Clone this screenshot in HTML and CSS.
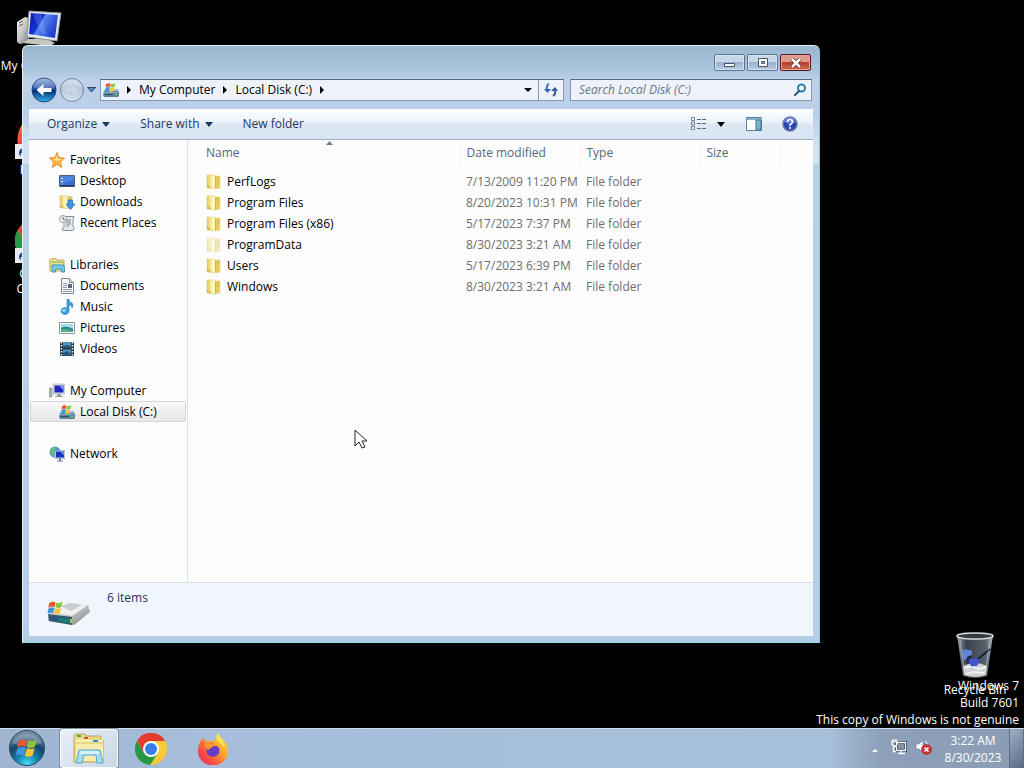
FILE: index.html
```html
<!DOCTYPE html>
<html lang="en">
<head>
  <meta charset="UTF-8">
  <title>Local Disk (C:)</title>
  <link rel="stylesheet" href="styles.css">
</head>
<body>
  <!-- shared drawings -->
  <svg class="defs" aria-hidden="true">
    <defs>
      <linearGradient id="gold" x1="0" x2="1"><stop offset="0" stop-color="#e2ca55"/><stop offset=".4" stop-color="#fbf2b0"/><stop offset=".6" stop-color="#dcc254"/><stop offset="1" stop-color="#efd96f"/></linearGradient>
      <linearGradient id="screen" x1="0" x2="1" y2=".5"><stop offset="0" stop-color="#0717a8"/><stop offset=".45" stop-color="#1733dc"/><stop offset=".5" stop-color="#5a86ee"/><stop offset="1" stop-color="#1c3fd0"/></linearGradient>
      <linearGradient id="metal" x1="0" y1="0" x2="1" y2="1"><stop offset="0" stop-color="#f5f5f5"/><stop offset=".5" stop-color="#c4c5c6"/><stop offset="1" stop-color="#77797b"/></linearGradient>
      <radialGradient id="orb" cx=".5" cy=".95" r=".9"><stop offset="0" stop-color="#3fe0f5"/><stop offset=".35" stop-color="#167fae"/><stop offset=".65" stop-color="#174468"/><stop offset="1" stop-color="#7891a6"/></radialGradient>
      <linearGradient id="fire" x1="1" y1="0" x2="0" y2="1"><stop offset="0" stop-color="#fff04a"/><stop offset=".4" stop-color="#ffa42b"/><stop offset=".7" stop-color="#ff503c"/><stop offset="1" stop-color="#e51c78"/></linearGradient>
      <linearGradient id="back" x1="0" y1="0" x2="0" y2="1"><stop offset="0" stop-color="#8dacdb"/><stop offset=".48" stop-color="#1e4aa0"/><stop offset=".52" stop-color="#07286f"/><stop offset="1" stop-color="#2fb7ef"/></linearGradient>
      <linearGradient id="forward" x1="0" y1="0" x2="0" y2="1"><stop offset="0" stop-color="#dbe5f1"/><stop offset=".5" stop-color="#b7c7da"/><stop offset="1" stop-color="#d8e4f2"/></linearGradient>
      <linearGradient id="glass" x1="0" x2="1"><stop offset="0" stop-color="#9ba7ae"/><stop offset=".25" stop-color="#39434d"/><stop offset=".8" stop-color="#55616b"/><stop offset="1" stop-color="#a8b2b8"/></linearGradient>
    </defs>
    <symbol id="flag" viewBox="0 0 20 20">
      <path d="M2 4q4-3 8-1L9 9Q5 7 1 10z" fill="#e8542c"/>
      <path d="M11 3q4 2 8-1l-2 7q-4 2-7 0z" fill="#8cc43e"/>
      <path d="M1 11q4-3 8-1l-2 7q-3-2-7 0z" fill="#4198df"/>
      <path d="M10 10q4 2 7 0l-2 7q-4 2-7 0z" fill="#fbc532"/>
    </symbol>
    <symbol id="folder" viewBox="0 0 16 16">
      <path d="M1 1h7l1 1h5v12l-6 1-7-1z" fill="url(#gold)" stroke="#dcc76c" stroke-width=".5"/>
      <path d="M6 1l3 1v13l-3-1z" fill="#fff7bd"/>
      <path d="M9 3h1v11l-1 1zM12 3h1v4l-1 2z" fill="#c3a63d" opacity=".6"/>
      <path d="M1 10l5 4H1z" fill="#c4a63c" opacity=".5"/>
    </symbol>
    <symbol id="drive" viewBox="0 0 16 16">
      <path d="M1 9l2-2h11l2 3v4l-1 1H1l-1-2z" fill="#5c849b"/>
      <path d="M1 9l2-2h10l2 2z" fill="#b9cbd2"/>
      <path d="M1 10h14v1H1z" fill="#86afc2"/>
      <path d="M2 12h8v1H2z" fill="#304f68"/>
      <path d="M12 12h2v1h-2z" fill="#74e14b"/>
      <use href="#flag" x="2" y="0" width="11" height="11"/>
    </symbol>
    <symbol id="computer" viewBox="0 0 48 48">
      <path d="M2 15l8-5 4 1v24l-9 2-3-2z" fill="url(#metal)"/>
      <path d="M4 16l4-2M4 19l4-2" stroke="#555" />
      <path d="M14 32h18l8 4-5 3-27-3z" fill="#c4c9bd"/>
      <path d="M14 4l32 2-4 28-30-4z" fill="#e4e9ee" stroke="#8b949c"/>
      <path d="M16 6l27 2-3 23-26-4z" fill="url(#screen)"/>
      <path d="M26 7l6 21-5-1L17 6z" fill="#b6d2ff" opacity=".2"/>
    </symbol>
    <symbol id="chrome" viewBox="0 0 32 32">
      <circle cx="16" cy="16" r="16" fill="#f9c938"/>
      <path d="M2 8a16 16 0 0 1 28 0H16l-7 12z" fill="#e33b2e"/>
      <path d="M2 8a16 16 0 0 0 13 24l8-12H9z" fill="#279847"/>
      <circle cx="16" cy="16" r="8" fill="#fff"/>
      <circle cx="16" cy="16" r="6" fill="#367de9"/>
    </symbol>
    <symbol id="firefox" viewBox="0 0 32 32">
      <path d="M6 5l4 4 6-2c2 0 3 0 4 1l-1-4 2-4 3 5c4 3 7 8 7 13a15 14 0 0 1-30 1C1 13 3 8 6 5z" fill="url(#fire)"/>
      <path d="M10 11l6-1c-3 2-1 3 3 3 3 0 4 4 3 7-2 5-10 5-12 0-1-3-1-6 0-9z" fill="#693bc7"/>
      <path d="M8 10c4-2 6 1 9 2-1 3-4 2-5 5-3-1-5-4-4-7z" fill="#ff9334"/>
      <path d="M21 0l3 5c3 3 4 7 3 11-1-5-5-6-7-8-1-3-1-6 1-8z" fill="#ffe14a"/>
    </symbol>
    <symbol id="shortcut" viewBox="0 0 14 14">
      <path d="M0 0h14v14H0z" fill="#e8ecf1"/>
      <path d="M5 12C2 7 5 4 8 4V1l5 5-5 5V8c-2 0-3 1-3 4z" fill="#254b92"/>
    </symbol>
  </svg>

  <main class="desktop">
    <div class="shortcuts">
      <a href="#" class="shortcut">
        <svg class="shortcut-icon"><use href="#computer"/></svg>
        <span>My Computer</span>
      </a>
      <a href="#" class="shortcut">
        <svg class="shortcut-icon" viewBox="0 0 48 48"><use href="#firefox" x="1" y="4" width="44" height="44"/><use href="#shortcut" y="33" x="0" width="15" height="15"/></svg>
        <span>Firefox</span>
      </a>
      <a href="#" class="shortcut">
        <svg class="shortcut-icon" viewBox="0 0 48 48"><use href="#chrome" x="0" y="4" width="44" height="44"/><use href="#shortcut" y="33" x="0" width="15" height="15"/></svg>
        <span>Google Chrome</span>
      </a>
    </div>

    <a href="#" class="shortcut recycle">
      <svg class="shortcut-icon" viewBox="0 0 48 48">
        <path d="M6 4h36l-6 41q-12 4-24 0z" fill="url(#glass)"/>
        <path d="M12 35q12-6 24 0l-1 9q-11 4-22 0z" fill="#cfd0d1"/>
        <path d="M14 37l7-2 6 3 8-2M15 43l8-2 10 1" stroke="#f0f0f0" stroke-width="2" fill="none"/>
        <path d="M18 25l5 5 4-2 12-10M15 22l3 10" stroke="#172138" stroke-width="2" fill="none"/>
        <path d="M11 20q3-3 6-1 4-1 4 3 0 3-4 3l-2 4q-4-1-3-4-2-2-1-5z" fill="#6283d6"/>
        <path d="M19 28q2-2 4 0 2-2 4 0 3 2 0 4 0 4-4 3-4 1-4-2-3-3 0-5z" fill="#4254cf"/>
        <ellipse cx="24" cy="5" rx="18" ry="3" fill="#363b3e" stroke="#d6dbde" stroke-width="1.5"/>
        <path d="M9 9l5 34M39 9l-5 34" stroke="#e8edf0" opacity=".4"/>
      </svg>
      <span>Recycle Bin</span>
    </a>

    <p class="watermark">Windows 7<br>Build 7601<br>This copy of Windows is not genuine</p>

    <section class="window">
      <header class="titlebar">
        <button class="caption" aria-label="Minimize"><svg width="12" height="10"><path d="M.5 5.500h10v3H.5z" fill="#fff" stroke="#46566b"/></svg></button>
        <button class="caption" aria-label="Maximize"><svg width="12" height="10"><path d="M1.500.5h9v8h-9z" fill="#fff" stroke="#46566b"/><path d="M4.500 3.500h3v2h-3z" fill="#9db4d0" stroke="#46566b"/></svg></button>
        <button class="caption close" aria-label="Close"><svg width="12" height="10"><path d="M2 1l8 8M10 1L2 9" stroke="#5b2a2b" stroke-width="4"/><path d="M2 1l8 8M10 1L2 9" stroke="#fff" stroke-width="2.500"/></svg></button>
      </header>

      <nav class="navbar">
        <div class="travel">
          <button aria-label="Back"><svg width="26" height="26"><circle cx="13" cy="13" r="12" fill="url(#back)" stroke="#24467d"/><path d="M2 10a11 9 0 0 1 22 0q-11 5-22 0z" fill="#fff" opacity=".2"/><path d="M5.500 13l7-6v4h8v4h-8v4z" fill="#fff"/></svg></button>
          <button aria-label="Forward"><svg width="26" height="26"><circle cx="13" cy="13" r="11.500" fill="url(#forward)" stroke="#71839b"/><path d="M20 13l-7-6v4H6v4h7v4z" fill="#c9d6e6" stroke="#b9c8da" stroke-width=".5"/></svg></button>
          <button aria-label="Recent pages"><svg width="10" height="8"><path d="M.5 1.500h8l-4 4.500z" fill="#4f8cc7" stroke="#1e4474"/></svg></button>
        </div>
        <div class="address">
          <svg class="icon"><use href="#drive"/></svg>
          <svg class="sep" viewBox="0 0 4 8"><path d="M0 0l4 4-4 4z"/></svg>
          <a href="#">My Computer</a>
          <svg class="sep" viewBox="0 0 4 8"><path d="M0 0l4 4-4 4z"/></svg>
          <a href="#">Local Disk (C:)</a>
          <svg class="sep" viewBox="0 0 4 8"><path d="M0 0l4 4-4 4z"/></svg>
          <button class="history" aria-label="Previous locations"><svg width="8" height="4"><path d="M0 0h8L4 4z"/></svg></button>
          <button class="refresh" aria-label="Refresh"><svg width="16" height="14"><path d="M6 1Q3 2 4 7" stroke="#3b75c4" stroke-width="2" fill="none"/><path d="M1 6h7l-3.500 4z" fill="#2d67ba"/><path d="M10 13q3-2 2-7" stroke="#2c5a9c" stroke-width="2" fill="none"/><path d="M8 8h7l-3-4z" fill="#2c5a9c"/></svg></button>
        </div>
        <div class="search">
          <input type="text" aria-label="Search" placeholder="Search Local Disk (C:)">
          <svg width="14" height="14"><circle cx="8.500" cy="5" r="3.500" fill="#eef8fd" stroke="#2f7fa9" stroke-width="2"/><path d="M6 8l-4 4" stroke="#27517c" stroke-width="2" stroke-linecap="round"/></svg>
        </div>
      </nav>

      <div class="client">
        <div class="toolbar">
          <button>Organize <svg width="8" height="5"><path d="M0 0h8L4 5z"/></svg></button>
          <button>Share with <svg width="8" height="5"><path d="M0 0h8L4 5z"/></svg></button>
          <button>New folder</button>
          <div class="tools">
            <button aria-label="Change your view"><svg width="16" height="14"><path d="M.5.5h3v3h-3zM.5 5h3v3h-3zM.5 9.500h3v3h-3z" fill="#fff" stroke="#6e8096"/><path d="M6 2.500h9M6 6.500h9M6 11.500h9" stroke="#52667e" stroke-dasharray="4 1"/></svg></button>
            <button aria-label="More options"><svg width="8" height="5"><path d="M0 0h8L4 5z"/></svg></button>
            <button aria-label="Preview pane"><svg width="17" height="14"><path d="M.5.5h15v13H.5z" fill="#fff" stroke="#5c7d96"/><path d="M1 1h15v2H1z" fill="#8bb2c9"/><path d="M10 3h5v10h-5z" fill="#76b9c5" stroke="#44758c"/></svg></button>
            <button aria-label="Help"><svg width="16" height="16"><circle cx="8" cy="8" r="7" fill="#2947b0" stroke="#6d7a9d" stroke-width="1.500"/><path d="M2 6a6 5 0 0 1 12 0q-6 4-12 0z" fill="#7e9be8" opacity=".6"/><path d="M5.500 6q0-2.500 2.500-2.500T10.500 6Q10.500 7 8 9v1M8 11v2" stroke="#fff" stroke-width="1.700" fill="none"/></svg></button>
          </div>
        </div>

        <div class="panes">
          <nav class="tree">
            <ul>
              <li><a href="#"><svg class="icon" viewBox="0 0 16 16"><path d="M8 .5l2 5 5.500.5-4 4 1.200 5.500L8 12.500l-4.700 3L4.500 10l-4-4L6 5.500z" fill="#fbb63f" stroke="#dc8428" stroke-width=".8"/><path d="M8 3l1 4 4 .5-5 1.500-4-2 3-.5z" fill="#ffe6a0"/></svg>Favorites</a></li>
              <li class="child"><a href="#"><svg class="icon" viewBox="0 0 16 16"><path d="M.5 2.500h15v11H.5z" fill="#386fd1" stroke="#4c6079"/><path d="M1 3h14v4Q7 7 3 13H1z" fill="#75aaf3" opacity=".4"/><path d="M1 12h14v1.500H1z" fill="#263f6a"/><path d="M2 5h2v1H2zM2 8h2v1H2z" fill="#e9f4fa"/></svg>Desktop</a></li>
              <li class="child"><a href="#"><svg class="icon" viewBox="0 0 16 16"><use href="#folder" width="15" height="16"/><path d="M9.500 6h4v4H16l-4.500 5.500L7 10h2.500z" fill="#3c96e4" stroke="#1c65ab" stroke-width=".7"/></svg>Downloads</a></li>
              <li class="child"><a href="#"><svg class="icon" viewBox="0 0 16 16"><path d="M5 1.500h10l-1 3v8l1.500 1-1.500 2H4l-1-2 2-1z" fill="#e8edf0" stroke="#838e96"/><path d="M7 5h5M7 7h5M7 9h5M7 11h3" stroke="#78858e"/><circle cx="4" cy="4" r="3.500" fill="#f5f7f8" stroke="#8d989f"/><path d="M4 2v2.500h2" stroke="#58656e" fill="none"/></svg>Recent Places</a></li>
            </ul>
            <ul>
              <li><a href="#"><svg class="icon" viewBox="0 0 16 16"><path d="M.5 3L3 1.500h4L8 3h7v11H1z" fill="#f2de84" stroke="#c6ad56"/><path d="M2 4h12v2H2z" fill="#a9cc83"/><path d="M3 8h12l.5 7h-3v-3h-6v3H3z" fill="#79cbec" stroke="#3994c2"/></svg>Libraries</a></li>
              <li class="child"><a href="#"><svg class="icon" viewBox="0 0 16 16"><path d="M2.500.5h8l4 4v11h-12z" fill="#f7f9fa" stroke="#7f8b94"/><path d="M10.500.5v4h4" fill="#d5dce1" stroke="#7f8b94"/><path d="M4 5.500h4M4 7.500h4M4 9.500h4M4 11.500h9M4 13.500h9" stroke="#8a98a4"/><path d="M9 6h4v4H9z" fill="#53687c"/></svg>Documents</a></li>
              <li class="child"><a href="#"><svg class="icon" viewBox="0 0 16 16"><path d="M8 0h2q0 3 3 4 2 2 0 5 0-3-3-3v6a4 3.500 0 1 1-2-3z" fill="#35a0dc" stroke="#1f75b0" stroke-width=".5"/><ellipse cx="5" cy="11.500" rx="2" ry="1.300" fill="#a6e2fa"/></svg>Music</a></li>
              <li class="child"><a href="#"><svg class="icon" viewBox="0 0 16 16"><path d="M.5 2.500h15v11H.5z" fill="#fff" stroke="#8497a3"/><path d="M2 4h12v8H2z" fill="#a2ddec"/><path d="M2 8q5-3 12 1v3H2z" fill="#267f89"/><path d="M2 9q7-1 12 2v1H2z" fill="#52ad83"/></svg>Pictures</a></li>
              <li class="child"><a href="#"><svg class="icon" viewBox="0 0 16 16"><path d="M1 1h14v14H1z" fill="#243744"/><path d="M4 1h8v6H4zM4 8.500h8V15H4z" fill="#5591bb"/><path d="M4 5l5-1 3 2v1H4zM4 12l4-2 4 3v2H4z" fill="#24567c"/><path d="M2.500 1v14M13.500 1v14" stroke="#eff4f6" stroke-width="1.500" stroke-dasharray="1.500 1.500"/></svg>Videos</a></li>
            </ul>
            <ul>
              <li><a href="#"><svg class="icon" viewBox="0 0 16 16"><path d="M0 5h3v9H0z" fill="#b3b5a6" stroke="#7a7c73" stroke-width=".5"/><path d="M4 1h12v10H4z" fill="#dde1e6" stroke="#8e98a4" stroke-width=".5"/><path d="M5.500 2.500h9v7h-9z" fill="#1b25c2"/><path d="M10 2.500h4.500v5z" fill="#7995ec"/><path d="M8 11h4v2h2v1H6v-1h2z" fill="#969ea6"/></svg>My Computer</a></li>
              <li class="child selected"><a href="#"><svg class="icon"><use href="#drive"/></svg>Local Disk (C:)</a></li>
            </ul>
            <ul>
              <li><a href="#"><svg class="icon" viewBox="0 0 16 16"><circle cx="6" cy="6" r="5.500" fill="#3b9bc6"/><path d="M1 4q3-4 6-3L5 5l3 2-2 4Q1 9 1 4z" fill="#65bd88"/><path d="M6 4.500h10v8H6z" fill="#d9e4ed" stroke="#6d87a1" stroke-width=".5"/><path d="M7 5.500h8v6H7z" fill="#1730be"/><path d="M11 5.500h4v4z" fill="#6c91ec"/><path d="M10 12.500h2v2h2v1H8v-1h2z" fill="#687b91"/></svg>Network</a></li>
            </ul>
          </nav>

          <div class="files">
            <svg class="sorted" width="7" height="4"><path d="M0 4l3.500-4L7 4z" fill="#6c7e90"/></svg>
            <table>
              <colgroup><col class="col-name"><col class="col-date"><col class="col-type"><col class="col-size"><col></colgroup>
              <thead>
                <tr><th>Name</th><th>Date modified</th><th>Type</th><th>Size</th><td></td></tr>
              </thead>
              <tbody>
                <tr><td><svg class="icon"><use href="#folder"/></svg>PerfLogs</td><td>7/13/2009 11:20 PM</td><td>File folder</td><td></td><td></td></tr>
                <tr><td><svg class="icon"><use href="#folder"/></svg>Program Files</td><td>8/20/2023 10:31 PM</td><td>File folder</td><td></td><td></td></tr>
                <tr><td><svg class="icon"><use href="#folder"/></svg>Program Files (x86)</td><td>5/17/2023 7:37 PM</td><td>File folder</td><td></td><td></td></tr>
                <tr class="hidden-item"><td><svg class="icon"><use href="#folder"/></svg>ProgramData</td><td>8/30/2023 3:21 AM</td><td>File folder</td><td></td><td></td></tr>
                <tr><td><svg class="icon"><use href="#folder"/></svg>Users</td><td>5/17/2023 6:39 PM</td><td>File folder</td><td></td><td></td></tr>
                <tr><td><svg class="icon"><use href="#folder"/></svg>Windows</td><td>8/30/2023 3:21 AM</td><td>File folder</td><td></td><td></td></tr>
              </tbody>
            </table>
          </div>
        </div>

        <footer class="details">
          <svg width="46" height="32" viewBox="0 0 46 32">
            <path d="M2 17L22 5l20 3 2 7-16 13-26-4z" fill="url(#metal)"/>
            <path d="M6 15L22 5l20 3-16 11z" fill="#eff0f0"/>
            <path d="M15 9l9-3 12 2-11 6z" fill="#c9cbcc"/>
            <path d="M2 17l24 3v8L3 24z" fill="#315c68"/>
            <path d="M5 20l16 2v3L5 23z" fill="#2b4f9a"/>
            <path d="M12 21l11 1v4l-11-2z" fill="#14866f"/>
            <path d="M24 22h2v4h-2z" fill="#89dd48"/>
            <use href="#flag" x="1" y="3" width="17" height="16"/>
          </svg>
          <span>6 items</span>
        </footer>
      </div>
    </section>

    <svg class="cursor" width="14" height="21"><path d="M1 1v16l4-4 3 6 3-1-3-6h5z" fill="#fff" stroke="#222"/></svg>
  </main>

  <footer class="taskbar">
    <button class="start" aria-label="Start"><svg width="38" height="38"><circle cx="19" cy="19" r="17.500" fill="url(#orb)" stroke="#23455f"/><path d="M4 14a16 14 0 0 1 30 0q-15 7-30 0z" fill="#fff" opacity=".25"/><use href="#flag" x="8" y="8" width="22" height="22"/></svg></button>
    <button class="task active" aria-label="Windows Explorer"><svg width="36" height="32" viewBox="0 0 36 32"><path d="M3 3l1-2h10l1 2h15v4h2v22H3z" fill="#eed982" stroke="#bda35a"/><path d="M5 6h27v22H5z" fill="#f8edaa"/><path d="M5 10h27M18 6h13" stroke="#d7c26b"/><path d="M6 2h4v2H6z" fill="#41a947"/><path d="M13 4h4v2h-4z" fill="#d34e32"/><path d="M22 7h5v2h-5z" fill="#3989cb"/><path d="M8 17h21l3 13h-6l-1-8H13l-2 8H5z" fill="#a4dcf5" stroke="#56a9d5"/><path d="M9 18h19v3H9z" fill="#d8f2fc"/></svg></button>
    <button class="task" aria-label="Google Chrome"><svg width="32" height="32"><use href="#chrome"/></svg></button>
    <button class="task" aria-label="Firefox"><svg width="32" height="32"><use href="#firefox"/></svg></button>
    <div class="tray">
      <button aria-label="Show hidden icons"><svg width="8" height="5"><path d="M0 4.500l4-4 4 4z" fill="#fff" stroke="#65758a" stroke-width=".5"/></svg></button>
      <button aria-label="Network"><svg width="16" height="16"><path d="M5.500 3.500h9v8h-9z" fill="#8194ac" stroke="#34465c" stroke-width="3"/><path d="M5.500 3.500h9v8h-9zM10 12v2M7 14.500h7M2.500 8v4.500H5M1 2.500h5v3l-2 2H3l-2-2zM2 0v3M5 0v3" fill="none" stroke="#fff" stroke-width="1.300"/></svg></button>
      <button aria-label="Volume muted"><svg width="18" height="16"><path d="M1 5h3l4-4v13l-4-4H1z" fill="#fff" stroke="#5c6d82" stroke-width=".6"/><path d="M10 2q3 2 3 6" stroke="#fff" fill="none"/><circle cx="11.500" cy="10.500" r="5" fill="#cf3434" stroke="#9e2227" stroke-width=".6"/><path d="M9.500 8.500l4 4M13.500 8.500l-4 4" stroke="#fff" stroke-width="1.600"/></svg></button>
      <button class="clock">3:22 AM<br>8/30/2023</button>
    </div>
    <button class="show-desktop" aria-label="Show desktop"></button>
  </footer>
</body>
</html>
```

FILE: styles.css
```css
*{
  box-sizing: border-box;
}
body{
  margin: 0;
  height: 100vh;
  display: flex;
  flex-direction: column;
  overflow: hidden;
  background: #000;
  color: #000;
  font: 12px/16px "Open Sans", "Noto Sans", sans-serif;
}
button, input{
  margin: 0;
  padding: 0;
  border: none;
  background: none;
  font: inherit;
  color: inherit;
}
a{
  color: inherit;
  text-decoration: none;
}
ul{
  list-style: none;
  margin: 0 0 21px;
  padding: 0;
}
svg{
  flex: none;
}
.defs{
  position: absolute;
  width: 0;
  height: 0;
}
.icon{
  width: 16px;
  height: 16px;
}

/*
 *  Desktop
 */
.desktop{
  flex: 1;
  position: relative;
  color: #fff;
}
.shortcuts{
  display: grid;
  grid-auto-rows: 104px;
  width: 78px;
  padding-top: 7px;
}
.shortcut{
  display: flex;
  flex-direction: column;
  align-items: center;
  gap: 3px;
  width: 78px;
  line-height: 15px;
  text-align: center;
}
.shortcut-icon{
  width: 48px;
  height: 48px;
}
.recycle{
  position: absolute;
  right: 10px;
  bottom: 31px;
}
.watermark{
  position: absolute;
  right: 5px;
  bottom: 0;
  margin: 0;
  line-height: 17px;
  text-align: right;
}
.cursor{
  position: absolute;
  left: 354px;
  top: 429px;
}

/*
 *  Explorer window
 */
.window{
  position: absolute;
  left: 22px;
  right: 204px;
  top: 45px;
  bottom: 85px;
  display: flex;
  flex-direction: column;
  padding: 0 6px 6px 6px;
  border: 1px solid #e5f2fa;
  border-right-color: #6fcde8;
  border-bottom-color: #8bd6ed;
  border-radius: 6px 6px 0 0;
  background: linear-gradient(#9cb6cf, #a9c5dd 24px, #c0d0e9 34px, #b9cfe9 70px, #d3e2f1 100px, #d3e2f1 117px, #b9d1e4 119px, #b5cee8);
  color: #000;
}
.titlebar{
  display: flex;
  justify-content: flex-end;
  gap: 2px;
  height: 33px;
  padding: 8px 2px 0 0;
}
.caption{
  display: flex;
  align-items: center;
  justify-content: center;
  width: 31px;
  height: 17px;
  border: 1px solid #5d7593;
  border-radius: 2px;
  background: linear-gradient(#c9d8e8 45%, #9bb2cf 50%, #b8cce4);
  box-shadow: inset 0 0 0 1px #d5e2f0;
}
.close{
  border-color: #551d23;
  background: linear-gradient(#dd9c8e 45%, #b93d2c 50%, #cc6b52);
  box-shadow: inset 0 0 0 1px #e5a99b;
}
.navbar{
  display: flex;
  align-items: center;
  height: 22px;
  margin: 0 1px 8px 2px;
}
.travel{
  display: flex;
  align-items: center;
  gap: 2px;
  width: 69px;
}
.travel button, .history, .refresh{
  display: flex;
  align-items: center;
  justify-content: center;
}
.address, .search{
  display: flex;
  align-items: center;
  height: 22px;
  border: 1px solid #8598b0;
  border-top-color: #59687c;
  background: #eef3fb;
}
.address{
  flex: 1;
  gap: 8px;
  padding-left: 2px;
}
.sep{
  width: 4px;
  height: 8px;
}
.history{
  width: 21px;
  height: 20px;
  margin-left: auto;
}
.refresh{
  width: 25px;
  height: 20px;
  margin-left: -8px;
  border-left: 1px solid #8598b0;
}
.search{
  width: 242px;
  margin-left: 6px;
  padding: 0 4px 0 8px;
}
.search input{
  flex: 1;
  min-width: 0;
  outline: none;
}
.search input::placeholder{
  color: #6d7580;
  font-style: italic;
  opacity: 1;
}
.client{
  flex: 1;
  display: flex;
  flex-direction: column;
  min-height: 0;
  background: #fdfdfe;
}
.toolbar{
  display: flex;
  align-items: center;
  gap: 30px;
  height: 31px;
  padding: 0 15px 0 18px;
  border-bottom: 1px solid #a0afc3;
  background: linear-gradient(#fdfeff, #ebf2fb 45%, #dde7f4 50%, #dbe6f4);
  color: #1e395b;
}
.toolbar button{
  display: flex;
  align-items: center;
  gap: 5px;
}
.toolbar path{
  fill: #1e395b;
}
.tools{
  display: flex;
  align-items: center;
  margin-left: auto;
}
.tools path, .tools circle{
  fill: revert-layer;
}
.tools button:nth-child(1){
  margin-right: 10px;
}
.tools button:nth-child(2){
  margin-right: 21px;
}
.tools button:nth-child(3){
  margin-right: 19px;
}
.panes{
  flex: 1;
  display: flex;
  min-height: 0;
}
.tree{
  width: 159px;
  padding: 9px 1px 0;
  border-right: 1px solid #d6e2f0;
}
.tree a{
  display: flex;
  align-items: center;
  gap: 5px;
  height: 21px;
  padding-left: 19px;
}
.tree .child a{
  padding-left: 29px;
}
.tree .selected a{
  padding-left: 28px;
  border: 1px solid #d6d6d8;
  border-radius: 2px;
  background: linear-gradient(#f8f8f9, #e7e7e8);
}
.files{
  flex: 1;
  position: relative;
  min-width: 0;
  padding-left: 12px;
}
.sorted{
  position: absolute;
  left: 138px;
  top: 1px;
}
table{
  width: 100%;
  table-layout: fixed;
  border-collapse: collapse;
}
.col-name{
  width: 260px;
}
.col-date, .col-type{
  width: 120px;
}
.col-size{
  width: 80px;
}
th, td{
  height: 21px;
  padding: 0 0 0 6px;
  font-weight: normal;
  text-align: left;
  color: #6d6d6d;
  white-space: nowrap;
}
th{
  height: 26px;
  border-right: 1px solid #eef3f7;
  color: #56677a;
}
tbody::before{
  content: "";
  display: block;
  height: 5px;
}
td:first-child{
  color: #000;
}
td .icon{
  margin-right: 5px;
  vertical-align: -4px;
}
.hidden-item .icon{
  opacity: .45;
}
.details{
  display: flex;
  height: 54px;
  padding: 7px 17px 0;
  gap: 15px;
  border-top: 1px solid #d4deea;
  background: #f1f5fc;
  color: #1e395b;
}
.details svg{
  margin-top: 7px;
}

/*
 *  Taskbar
 */
.taskbar{
  display: flex;
  height: 40px;
  gap: 4px;
  border-top: 1px solid #d0dcea;
  background: linear-gradient(90deg, #9db5cf, #a6bedb 20%, #a6bfdb 81%, #8da0b9 86%, #8b9db5);
}
.start{
  width: 56px;
  padding-right: 2px;
}
.task{
  display: flex;
  align-items: center;
  justify-content: center;
  width: 58px;
}
.active{
  border: 1px solid #f6fafd;
  border-radius: 3px;
  background: linear-gradient(135deg, #e9f0f7, #c9d6e5);
  box-shadow: 0 0 0 1px #7b8ea6;
}
.tray{
  display: flex;
  align-items: center;
  gap: 8px;
  margin-left: auto;
  color: #fff;
}
.tray button:first-child{
  margin-right: 4px;
}
.clock{
  width: 72px;
  margin-left: -4px;
  line-height: 17px;
}
.show-desktop{
  width: 15px;
  margin-left: -4px;
  border: 1px solid #5b6d84;
  border-width: 0 1px;
  background: linear-gradient(135deg, #9fb0c5, #586b83);
}
```
